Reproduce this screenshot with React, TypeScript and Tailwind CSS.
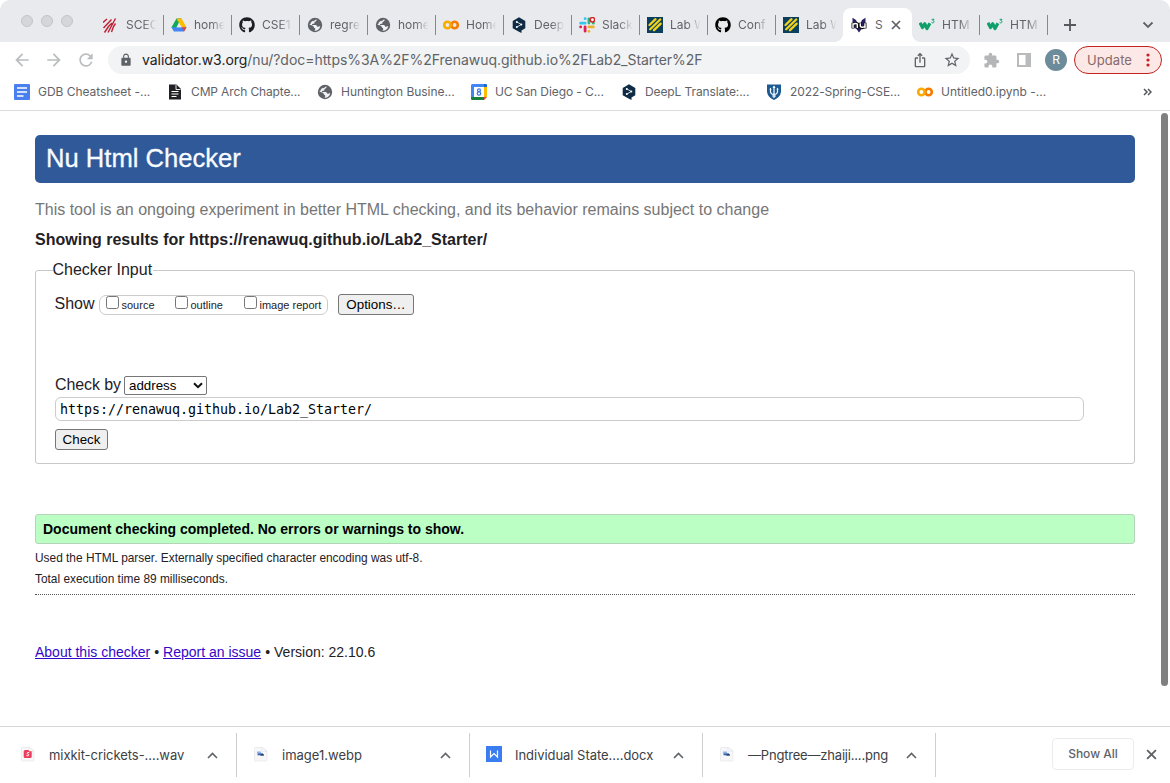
import type { ReactNode } from "react";
import {
  MdArrowBack,
  MdArrowForward,
  MdRefresh,
  MdLock,
  MdIosShare,
  MdStarOutline,
  MdExtension,
} from "react-icons/md";
import { FaGithub } from "react-icons/fa";

const Svg = ({ children, size = 16 }: { children: ReactNode; size?: number }) => (
  <svg width={size} height={size} viewBox="0 0 16 16" fill="none" className="shrink-0">
    {children}
  </svg>
);

const Scec = () => (
  <Svg>
    <g stroke="#bf1f33" strokeWidth="1.4">
      <path d="M0 5.500 4 2M.5 11 8.500 2.500M1.500 15.500 5.500 9.500 9 6M5 15.500 9 8 12.500 1.500M8.500 15 10.500 9.500 12.500 6.500" />
    </g>
  </Svg>
);
const Drive = () => (
  <Svg>
    <path d="M5.5 1.5h5L8 6z" fill="#188038" />
    <path d="M5.5 1.5 8 6l-4.500 8.500L.5 10.200z" fill="#0fa958" />
    <path d="M10.500 1.500 15.500 10.200H10.500L5.500 1.500z" fill="#fbbc04" />
    <path d="M.5 10.200h15l-2.500 4.300H3z" fill="#4285f4" />
    <path d="M11 10.200h4.500L13 14.500z" fill="#ea4335" />
    <path d="M8 5.800 10.500 10.200h-5z" fill="#e8eaed" />
  </Svg>
);
const Globe = () => (
  <Svg>
    <circle cx="8" cy="8" r="7.200" fill="#5f6368" />
    <path
      d="M9.300 2.300c.6 1.500-.2 2.300-1.600 2.500-.6.900.3 1.300-.5 1.700-.8.400-1.800 0-2.200.8-.3.800.6.900 1.600.8h2.200c1.300.2.900 1.600 1.900 1.700.7 0 1.300-.5 2.600-.5a5.800 5.800 0 0 1-6 4.400c.4-.8 1.300-1.300.8-2.200-.5-.7-1.500-.4-1.600-1.400-.1-.9-.9-1.200-1.700-1.500L2.300 7.400"
      fill="#f1f3f4"
    />
    <path d="M5.500 8.700c.8.500 1.200.9 1.200 1.500 0 .8.900.8 1.300 1.400.3.500-.3 1.100-.7 1.900-2.700-.2-4.700-2.300-5-5z" fill="#5f6368" />
    <path d="M3.300 6.200 5 4.300l2.200-.6-1 1.700-1.700 1.200z" fill="#f1f3f4" />
  </Svg>
);
const Colab = () => (
  <Svg>
    <circle cx="4.400" cy="8" r="3.200" stroke="#f9ab00" strokeWidth="2.600" />
    <circle cx="11.600" cy="8" r="3.200" stroke="#f57c00" strokeWidth="2.600" />
    <path d="M6.300 10.800Q8 9.500 8 8t-1.700-2.800" stroke="#f9ab00" strokeWidth="1.800" />
  </Svg>
);
const Deepl = () => (
  <Svg>
    <path d="M8 .3 14.300 4v7.200L10.500 13.400V16L7.500 14.600 1.700 11.200V4z" fill="#0f2b46" />
    <path d="M5.800 4.900 10.300 7.500 5.800 10.100" stroke="#fff" strokeWidth=".8" />
    <circle cx="5.800" cy="4.900" r="1" fill="#fff" />
    <circle cx="10.300" cy="7.500" r="1" fill="#fff" />
    <circle cx="5.800" cy="10.100" r="1" fill="#fff" />
  </Svg>
);
const Slack = () => (
  <Svg>
    <g strokeWidth="2.800" strokeLinecap="round">
      <path d="M6.100 1.700h.1M1.600 6.200h4.500" stroke="#36c5f0" />
      <path d="M9.900 2v4.100M14.300 6.200h.1" stroke="#2eb67d" />
      <path d="M6.100 9.900v4.300M1.600 9.900h.1" stroke="#e01e5a" />
      <path d="M9.900 9.900h4.500M9.900 14.300h.1" stroke="#ecb22e" />
    </g>
    <circle cx="13.400" cy="2.700" r="2.200" fill="#fff" stroke="#d8232a" strokeWidth="1.500" />
  </Svg>
);
const Lab = () => (
  <Svg>
    <path d="M0 0h16v16H0z" fill="#0b3f5c" />
    <path
      d="M2.500 8 8.500 2.200M3.200 12.300 13.200 2.500M7 13.200 13.700 6.700"
      stroke="#f2d21b"
      strokeWidth="2.300"
      strokeLinecap="round"
    />
  </Svg>
);
const NuLogo = () => (
  <Svg>
    <path d="M1.500.8 5 3 8 9l3-6 3.500-2.200V7L13 11l-2.500 1-2.500 3.500L5.500 12 3 10.500 1.500 6z" fill="#29205f" />
    <path
      d="M2 11.500V5.700M2 7.500Q4.500 5.500 6.500 7v4.500M9.300 5.700V9.500q.5 1.500 2.500 1 2-.2 2.200-1.500M14 5.700v5.800"
      stroke="#111"
      strokeWidth="3"
    />
    <path
      d="M2 11V6.200M2 7.500Q4.500 5.700 6.300 7v4M9.300 6.200V9q.5 1.600 2.500 1.200 1.800-.3 2.200-1.500M14 6.200V11"
      stroke="#fff"
      strokeWidth="1.400"
    />
  </Svg>
);
const W3s = () => (
  <Svg>
    <path d="M1 5.800 3.500 10.500l2.200-3.700 2.300 4.700 2.900-5.300" stroke="#0f9f6b" strokeWidth="3.200" strokeLinejoin="round" />
    <path d="M12.700 2.300h2.300l-1.200 1.300c1.700 0 1.600 2.300-.1 2.300-.5 0-.9-.2-1.200-.6" stroke="#0f9f6b" strokeWidth="1" />
  </Svg>
);
const Docs = () => (
  <Svg>
    <rect width="16" height="16" rx="1" fill="#4a80ee" />
    <path d="M3 4h10M3 8h10M3 12h6.500" stroke="#fff" strokeWidth="1.700" />
  </Svg>
);
const DarkDoc = () => (
  <Svg>
    <path d="M2 .5h7.500L14 5v10.500H2z" fill="#202124" />
    <path d="M9 1v4.500h4.500" stroke="#fff" strokeWidth=".9" />
    <path d="M4.500 7.500h7M4.500 10h7M4.500 12.500h5" stroke="#fff" strokeWidth="1.100" />
  </Svg>
);
const Calendar = () => (
  <Svg>
    <path d="M1 0h14l1 1v11.500L12.500 16H1l-1-1V1z" fill="#4285f4" />
    <path d="M13 3h3v10h-3z" fill="#fbbc04" />
    <path d="M0 13h13v3H1l-1-1z" fill="#188038" />
    <path d="M13 13h3l-3 3z" fill="#ea4335" />
    <path d="M13 0h2l1 1v2h-3z" fill="#1967d2" />
    <path d="M3 3h10v10H3z" fill="#fff" />
    <ellipse cx="8" cy="6.200" rx="1.500" ry="1.400" stroke="#3b78e7" strokeWidth="1.200" />
    <ellipse cx="8" cy="9.500" rx="1.800" ry="1.700" stroke="#3b78e7" strokeWidth="1.200" />
  </Svg>
);
const Trident = () => (
  <Svg>
    <path d="M1 .5h14V8q-1 5.500-7 8-6-2.500-7-8z" fill="#1b5a93" />
    <path d="M8 2.500V14M4.500 4.500V8q.5 2.500 3.500 2.500T11.500 8V4.500M6 12h4" stroke="#fff" strokeWidth="1.200" />
    <path d="M8 1.500 9.500 4h-3zM4.500 3.500l1 2h-2zM11.500 3.500l1 2h-2z" fill="#fff" />
  </Svg>
);

const FileIcon = ({ kind }: { kind: string }) => {
  if (kind === "doc")
    return (
      <svg width="16" height="16" viewBox="0 0 16 16" fill="none" className="-mt-[2px] shrink-0">
        <path d="M0 0h16v16H0z" fill="#3a7df0" />
        <path d="M4.500 4.500v6.500l3.500-3.500 3.500 3.500V4.500" stroke="#fff" strokeWidth="1.200" />
      </svg>
    );
  return (
    <svg width="16" height="16" viewBox="0 0 16 16" fill="none" className="-mt-[2px] shrink-0">
      <path
        d="M2.500 1.500h6.500L14 5v9q0 1-1 1H2.500q-1 0-1-1V2.500q0-1 1-1z"
        fill="#f7f7f9"
        stroke="#e6e6ea"
        strokeWidth=".7"
      />
      {kind === "wav" ? (
        <>
          <rect x="3.700" y="4" width="8" height="8" rx="1.500" fill="#ee3c5c" />
          <path d="M9.300 6.500H7.500q-1.300 1.300.3 1.500 1.800.3.500 1.700H6.300" stroke="#fff" strokeWidth=".9" />
        </>
      ) : (
        <>
          <path d="M4 5.500h4v1.800H4z" fill="#8db1ea" />
          <path d="M4.500 7.300h5.500v2H4.500z" fill="#3a68b8" />
          <path d="M7.500 8.300h3.500v1.300H7.500z" fill="#27364f" />
        </>
      )}
      <path d="M9 1.500V5h5z" fill="#fff" stroke="#dedee2" strokeWidth=".6" />
    </svg>
  );
};

const Close = ({ size }: { size: number }) => (
  <svg width={size} height={size} viewBox="0 0 10 10" className="shrink-0">
    <path d="M1 1l8 8M9 1 1 9" stroke="#5f6368" strokeWidth="1.700" />
  </svg>
);

const tabs: { icon: ReactNode; label: string; active?: boolean; sep: boolean }[] = [
  { icon: <Scec />, label: "SCEC", sep: true },
  { icon: <Drive />, label: "home", sep: true },
  { icon: <FaGithub size={16} color="#1b1f23" className="shrink-0" />, label: "CSE1", sep: true },
  { icon: <Globe />, label: "regre", sep: true },
  { icon: <Globe />, label: "home", sep: true },
  { icon: <Colab />, label: "Home", sep: true },
  { icon: <Deepl />, label: "Deep", sep: true },
  { icon: <Slack />, label: "Slack", sep: true },
  { icon: <Lab />, label: "Lab W", sep: true },
  { icon: <FaGithub size={16} color="#000" className="shrink-0" />, label: "Conf", sep: true },
  { icon: <Lab />, label: "Lab W", sep: false },
  { icon: <NuLogo />, label: "S", active: true, sep: false },
  { icon: <W3s />, label: "HTM", sep: true },
  { icon: <W3s />, label: "HTM", sep: true },
];

function Tab({ icon, label, active, sep }: (typeof tabs)[number]) {
  if (active)
    return (
      <div className="relative -ml-px flex h-[34px] w-[69px] items-center self-end rounded-t-lg bg-white pl-2">
        <span className="absolute bottom-0 -left-2 size-2 bg-[radial-gradient(circle_at_0_0,#e8eaed_7.5px,white_8px)]" />
        <span className="absolute -right-2 bottom-0 size-2 bg-[radial-gradient(circle_at_100%_0,#e8eaed_7.5px,white_8px)]" />
        {icon}
        <span className="ml-2 w-[9px] text-xs text-[#5f6368]">{label}</span>
        <span className="ml-[7px]">
          <Close size={10} />
        </span>
      </div>
    );
  return (
    <div className="flex w-[68px] items-center pt-2">
      <div
        className={
          sep
            ? "flex h-5 w-full items-center border-r border-[#85888c] pl-[7px]"
            : "flex h-5 w-full items-center border-r border-transparent pl-[7px]"
        }
      >
        {icon}
        <span className="ml-[7px] w-[34px] whitespace-nowrap text-xs text-[#5f6368] [mask-image:linear-gradient(to_right,black_50%,transparent_90%)]">
          {label}
        </span>
      </div>
    </div>
  );
}

const bookmarks = [
  { icon: <Docs />, label: "GDB Cheatsheet -...", cls: "w-[153px] tracking-[-0.04px]" },
  { icon: <DarkDoc />, label: "CMP Arch Chapte...", cls: "w-[150px] tracking-[-0.13px]" },
  { icon: <Globe />, label: "Huntington Busine...", cls: "w-[154px] tracking-[-0.04px]" },
  { icon: <Calendar />, label: "UC San Diego - C...", cls: "w-[150px] tracking-[-0.09px]" },
  { icon: <Deepl />, label: "DeepL Translate:...", cls: "w-[145px] tracking-[-0.1px]" },
  { icon: <Trident />, label: "2022-Spring-CSE...", cls: "w-[151px] tracking-[-0.085px]" },
  { icon: <Colab />, label: "Untitled0.ipynb -...", cls: "w-[150px]" },
];

const downloads = [
  { kind: "wav", label: "mixkit-crickets-....wav", cls: "tracking-[-0.05px]", box: "w-[237px] pl-[20px]" },
  { kind: "img", label: "image1.webp", cls: "", box: "w-[233px] pl-[16px]" },
  { kind: "doc", label: "Individual State....docx", cls: "tracking-[-0.035px]", box: "w-[233px] pl-[16px]" },
  { kind: "img", label: "—Pngtree—zhaiji....png", cls: "tracking-[-0.194px]", box: "w-[233px] pl-[16px]" },
];

function BrowserChrome() {
  return (
    <header className="h-[111px] shrink-0 border-b border-[#dadce0] font-['Inter',sans-serif]">
      <div className="flex h-[42px] rounded-t-[10px] bg-[#e8eaed]">
        <div className="flex w-24 gap-[8px] pt-[15px] pl-[21px]">
          {[0, 1, 2].map((n) => (
            <span key={n} className="size-3 rounded-full border border-[#c3c4c7] bg-[#d5d6d9]" />
          ))}
        </div>
        {tabs.map((t, i) => (
          <Tab key={i} {...t} />
        ))}
        <div className="flex flex-1 items-center justify-between pt-2 pr-4 pl-4">
          <svg width="12" height="12" viewBox="0 0 12 12">
            <path d="M6 0v12M0 6h12" stroke="#55585c" strokeWidth="1.800" />
          </svg>
          <svg width="12" height="8" viewBox="0 0 12 8" fill="none">
            <path d="M1.500 1.500 6 6l4.500-4.500" stroke="#5f6368" strokeWidth="1.800" />
          </svg>
        </div>
      </div>
      <div className="flex h-9 items-center">
        <MdArrowBack size={20} color="#babcbe" className="ml-3" />
        <MdArrowForward size={20} color="#babcbe" className="ml-3" />
        <MdRefresh size={20} color="#babcbe" className="ml-3" />
        <div className="ml-3 flex h-7 w-[862px] items-center rounded-full bg-[#f1f3f4] pr-[9px] pl-[11px]">
          <MdLock size={14} color="#5f6368" />
          <span className="ml-[9px] flex-1 text-sm tracking-[-0.045px] text-[#5f6368]">
            <span className="text-[#202124]">validator.w3.org</span>
            /nu/?doc=https%3A%2F%2Frenawuq.github.io%2FLab2_Starter%2F
          </span>
          <MdIosShare size={16} color="#5f6368" />
          <MdStarOutline size={18} color="#5f6368" className="ml-[15px]" />
        </div>
        <MdExtension size={17} color="#b4b6b8" className="ml-[13px]" />
        <svg width="14" height="14" viewBox="0 0 14 14" fill="none" className="ml-[17px]">
          <path d="M1 1h12v12H1z" stroke="#b8babc" strokeWidth="2" />
          <path d="M8.500 1H13v12H8.500z" fill="#b8babc" />
        </svg>
        <span className="ml-[14px] flex size-[22px] items-center justify-center rounded-full bg-[#6d8c9b] text-xs text-white">
          R
        </span>
        <div className="ml-[7px] flex h-7 w-[88px] items-center rounded-full border border-[#c5221f] bg-[#fce8e6] pl-3 text-[13px] tracking-[0.065px] text-[#87696a]">
          <span className="pt-px">Update</span>
          <svg width="4" height="14" viewBox="0 0 4 14" fill="#c5221f" className="ml-[14px]">
            <circle cx="2" cy="2" r="1.600" />
            <circle cx="2" cy="7" r="1.600" />
            <circle cx="2" cy="12" r="1.600" />
          </svg>
        </div>
      </div>
      <div className="flex h-7 items-center pl-[14px] text-xs text-[#5f6368]">
        {bookmarks.map((b) => (
          <div key={b.label} className={`flex shrink-0 items-center gap-2 whitespace-nowrap ${b.cls}`}>
            {b.icon}
            {b.label}
          </div>
        ))}
        <svg width="9" height="8" viewBox="0 0 9 8" fill="none" className="ml-[76px]">
          <path d="M1 1l3 3-3 3M5 1l3 3-3 3" stroke="#55585c" strokeWidth="1.500" />
        </svg>
      </div>
    </header>
  );
}

const Check = ({ label, cls }: { label: string; cls: string }) => (
  <label className={`flex ${cls}`}>
    <span className="size-[13px] rounded-[2.5px] border border-[#767676] bg-white" />
    <span className="ml-[2.5px] pt-px text-[11px] leading-4">{label}</span>
  </label>
);

function Page() {
  return (
    <main className="flex h-[615px] shrink-0 justify-between font-['Liberation_Sans',Arial,sans-serif] text-[#1f2126]">
      <div className="ml-[35px] w-[1100px] pt-6">
        <h1 className="h-12 rounded-[5px] bg-[#30599a] pl-[11px] text-[25.6px] leading-[47px] text-[#f8fbff] [-webkit-text-stroke:0.3px_#f8fbff]">
          Nu Html Checker
        </h1>
        <p className="mt-[17px] text-base leading-5 text-[#767676]">
          This tool is an ongoing experiment in better HTML checking, and its behavior remains subject to change
        </p>
        <h2 className="mt-[10px] text-base leading-5 font-bold tracking-[0.01px]">
          Showing results for https://renawuq.github.io/Lab2_Starter/
        </h2>
        <section className="mt-[20px] h-[194px] rounded-[3px] border border-[#c8c8c8] pl-[19px]">
          <div className="-mt-[11px] -ml-[2.5px] h-5 w-[100px] bg-white text-base leading-5">Checker Input</div>
          <div className="mt-[14px] flex h-[22px]">
            <span className="w-[44px] text-base leading-[20px]">
              <span className="-ml-[0.5px]">Show</span>
            </span>
            <div className="mt-[1px] flex h-5 w-[229px] rounded-[7px] border border-[#ccc] pl-[6px]">
              <Check label="source" cls="w-[69px]" />
              <Check label="outline" cls="w-[69px]" />
              <Check label="image report" cls="whitespace-nowrap" />
            </div>
            <button className="ml-[10px] h-[21px] w-[76px] rounded-[3px] border border-[#767676] bg-[#efefef] text-[13.33px] leading-[19px] text-black">
              Options…
            </button>
          </div>
          <div className="mt-[59px] flex h-[21px] items-start">
            <span className="w-[69px] text-base leading-[19px] tracking-[-0.088px]">Check by</span>
            <div className="mt-px flex h-[19px] w-[83px] items-center justify-between rounded-[2px] border border-[#767676] bg-white pr-[3px] pl-1 text-[13.33px] text-black">
              address
              <svg width="10" height="7" viewBox="0 0 10 7" fill="none">
                <path d="M1 1.200 5 5.200l4-4" stroke="#111" strokeWidth="2" />
              </svg>
            </div>
          </div>
          <div className="mt-px h-6 w-[1029px] rounded-[6px] border border-[#ccc] pl-1 font-['DejaVu_Sans_Mono',monospace] text-[13.33px] leading-[23px] tracking-[-0.024px] text-black">
            https://renawuq.github.io/Lab2_Starter/
          </div>
          <button className="mt-2 block h-[21px] w-[53px] rounded-[3px] border border-[#767676] bg-[#efefef] text-[13.33px] leading-[19px] text-black">
            Check
          </button>
        </section>
        <p className="mt-[50px] h-[30px] rounded-[3px] border border-[#b5d3b8] bg-[#bbffc4] pl-[7px] text-sm leading-[28px] font-bold text-black">
          Document checking completed. No errors or warnings to show.
        </p>
        <p className="mt-[4px] text-[11.9px] leading-5">
          Used the HTML parser. Externally specified character encoding was utf-8.
        </p>
        <p className="mt-px text-[11.9px] leading-5">Total execution time 89 milliseconds.</p>
        <div className="mt-[5px] border-t border-dotted border-[#555]" />
        <p className="mt-[47px] flex gap-1 text-sm leading-5">
          <a className="text-[#3408c8] underline">About this checker</a>•
          <a className="text-[#3408c8] underline">Report an issue</a>•<span>Version: 22.10.6</span>
        </p>
      </div>
      <div className="mt-[2px] mr-[2px] h-[573px] w-[7px] rounded-full bg-[#808080]" />
    </main>
  );
}

function DownloadShelf() {
  return (
    <footer className="flex h-[57px] shrink-0 border-t border-[#d5d6d8] font-['Inter',sans-serif] text-[#3c4043]">
      {downloads.map((d) => (
        <div
          key={d.label}
          className={`mt-[6px] flex h-[44px] items-center justify-between border-r border-[#cfcfd1] pr-[18px] ${d.box}`}
        >
          <div className="flex items-center gap-[13px]">
            <FileIcon kind={d.kind} />
            <span className={`pt-[2px] text-[13px] whitespace-nowrap ${d.cls}`}>{d.label}</span>
          </div>
          <svg width="11" height="7" viewBox="0 0 11 7" fill="none">
            <path d="M1 6l4.500-4.500L10 6" stroke="#5f6368" strokeWidth="1.600" />
          </svg>
        </div>
      ))}
      <div className="mt-[11px] ml-[116px] flex h-8 w-[82px] items-center justify-center rounded border border-[#ececee] text-xs font-medium text-[#5f6368]">
        <span className="-mt-px">Show All</span>
      </div>
      <span className="mt-[22px] ml-[12px]">
        <Close size={11} />
      </span>
    </footer>
  );
}

export default function App() {
  return (
    <div className="flex h-[783px] w-[1170px] flex-col overflow-hidden bg-white">
      <BrowserChrome />
      <Page />
      <DownloadShelf />
    </div>
  );
}
